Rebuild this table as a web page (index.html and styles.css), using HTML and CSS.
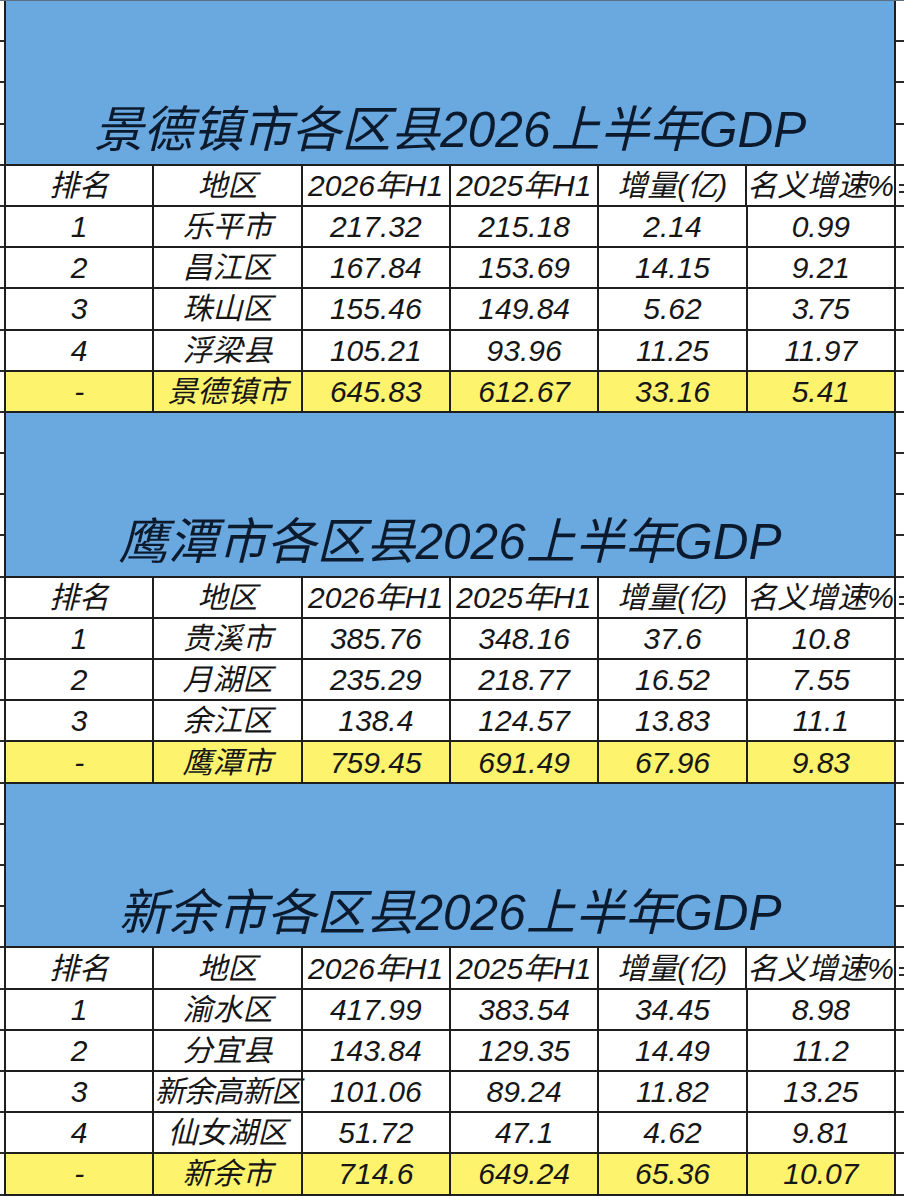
FILE: index.html
```html
<!DOCTYPE html>
<html lang="zh-CN">
<head>
<meta charset="utf-8">
<title>江西各市区县2026上半年GDP</title>
<link rel="stylesheet" href="styles.css">
</head>
<body>
<div class="page">

  <section class="block">
    <div class="edge edge-left">
      <div class="ec"></div><div class="ec"></div><div class="ec"></div><div class="ec"></div>
      <div class="ec"></div><div class="ec"></div><div class="ec"></div><div class="ec"></div><div class="ec"></div><div class="ec"></div>
    </div>
    <div class="sheet">
      <div class="title">景德镇市各区县2026上半年GDP</div>
      <div class="row head"><div class="c">排名</div><div class="c">地区</div><div class="c">2026年H1</div><div class="c">2025年H1</div><div class="c">增量(亿)</div><div class="c">名义增速%</div></div>
      <div class="row"><div class="c">1</div><div class="c">乐平市</div><div class="c">217.32</div><div class="c">215.18</div><div class="c">2.14</div><div class="c">0.99</div></div>
      <div class="row"><div class="c">2</div><div class="c">昌江区</div><div class="c">167.84</div><div class="c">153.69</div><div class="c">14.15</div><div class="c">9.21</div></div>
      <div class="row"><div class="c">3</div><div class="c">珠山区</div><div class="c">155.46</div><div class="c">149.84</div><div class="c">5.62</div><div class="c">3.75</div></div>
      <div class="row"><div class="c">4</div><div class="c">浮梁县</div><div class="c">105.21</div><div class="c">93.96</div><div class="c">11.25</div><div class="c">11.97</div></div>
      <div class="row total"><div class="c">-</div><div class="c">景德镇市</div><div class="c">645.83</div><div class="c">612.67</div><div class="c">33.16</div><div class="c">5.41</div></div>
    </div>
    <div class="edge edge-right">
      <div class="ec"></div><div class="ec"></div><div class="ec"></div><div class="ec"></div>
      <div class="ec"><span class="peek"></span></div><div class="ec"></div><div class="ec"></div><div class="ec"></div><div class="ec"></div><div class="ec"></div>
    </div>
  </section>

  <section class="block">
    <div class="edge edge-left">
      <div class="ec"></div><div class="ec"></div><div class="ec"></div><div class="ec"></div>
      <div class="ec"></div><div class="ec"></div><div class="ec"></div><div class="ec"></div><div class="ec"></div>
    </div>
    <div class="sheet">
      <div class="title">鹰潭市各区县2026上半年GDP</div>
      <div class="row head"><div class="c">排名</div><div class="c">地区</div><div class="c">2026年H1</div><div class="c">2025年H1</div><div class="c">增量(亿)</div><div class="c">名义增速%</div></div>
      <div class="row"><div class="c">1</div><div class="c">贵溪市</div><div class="c">385.76</div><div class="c">348.16</div><div class="c">37.6</div><div class="c">10.8</div></div>
      <div class="row"><div class="c">2</div><div class="c">月湖区</div><div class="c">235.29</div><div class="c">218.77</div><div class="c">16.52</div><div class="c">7.55</div></div>
      <div class="row"><div class="c">3</div><div class="c">余江区</div><div class="c">138.4</div><div class="c">124.57</div><div class="c">13.83</div><div class="c">11.1</div></div>
      <div class="row total"><div class="c">-</div><div class="c">鹰潭市</div><div class="c">759.45</div><div class="c">691.49</div><div class="c">67.96</div><div class="c">9.83</div></div>
    </div>
    <div class="edge edge-right">
      <div class="ec"></div><div class="ec"></div><div class="ec"></div><div class="ec"></div>
      <div class="ec"><span class="peek"></span></div><div class="ec"></div><div class="ec"></div><div class="ec"></div><div class="ec"></div>
    </div>
  </section>

  <section class="block">
    <div class="edge edge-left">
      <div class="ec"></div><div class="ec"></div><div class="ec"></div><div class="ec"></div>
      <div class="ec"></div><div class="ec"></div><div class="ec"></div><div class="ec"></div><div class="ec"></div><div class="ec"></div>
    </div>
    <div class="sheet">
      <div class="title">新余市各区县2026上半年GDP</div>
      <div class="row head"><div class="c">排名</div><div class="c">地区</div><div class="c">2026年H1</div><div class="c">2025年H1</div><div class="c">增量(亿)</div><div class="c">名义增速%</div></div>
      <div class="row"><div class="c">1</div><div class="c">渝水区</div><div class="c">417.99</div><div class="c">383.54</div><div class="c">34.45</div><div class="c">8.98</div></div>
      <div class="row"><div class="c">2</div><div class="c">分宜县</div><div class="c">143.84</div><div class="c">129.35</div><div class="c">14.49</div><div class="c">11.2</div></div>
      <div class="row"><div class="c">3</div><div class="c tight">新余高新区</div><div class="c">101.06</div><div class="c">89.24</div><div class="c">11.82</div><div class="c">13.25</div></div>
      <div class="row"><div class="c">4</div><div class="c">仙女湖区</div><div class="c">51.72</div><div class="c">47.1</div><div class="c">4.62</div><div class="c">9.81</div></div>
      <div class="row total"><div class="c">-</div><div class="c">新余市</div><div class="c">714.6</div><div class="c">649.24</div><div class="c">65.36</div><div class="c">10.07</div></div>
    </div>
    <div class="edge edge-right">
      <div class="ec"></div><div class="ec"></div><div class="ec"></div><div class="ec"></div>
      <div class="ec"><span class="peek"></span></div><div class="ec"></div><div class="ec"></div><div class="ec"></div><div class="ec"></div><div class="ec"></div>
    </div>
  </section>

</div>
</body>
</html>
```

FILE: styles.css
```css
* { box-sizing: border-box; }

html, body {
  margin: 0;
  padding: 0;
  background: #ffffff;
}

body {
  width: 904px;
  height: 1196px;
  overflow: hidden;
  font-family: "Liberation Sans", "Noto Sans CJK SC", sans-serif;
  color: #161616;
}

.page {
  border-top: 1px solid #5b6f86;
}

.block {
  display: flex;
}

.edge {
  display: flex;
  flex-direction: column;
}

.edge-left {
  width: 6px;
  border-right: 2px solid #1e1e1e;
}

.edge-right {
  width: 8px;
}

.ec {
  height: 41.2px;
  border-bottom: 2px solid #2a2a2a;
  overflow: hidden;
  display: flex;
  align-items: center;
  padding-left: 3px;
}

.peek {
  display: block;
  width: 6px;
  height: 9px;
  border-top: 2px solid #2a2a2a;
  border-bottom: 2px solid #2a2a2a;
  margin-top: 6px;
}

.sheet {
  width: 890px;
  display: flex;
  flex-direction: column;
}

.title {
  height: 164.8px;
  background: #6aa8e0;
  border-bottom: 2px solid #1e1e1e;
  border-right: 2px solid #1e1e1e;
  display: flex;
  align-items: flex-end;
  justify-content: center;
  padding-bottom: 4px;
  font-size: 49.5px;
  line-height: 1.2;
  font-style: italic;
  color: #0c1a2e;
  white-space: nowrap;
}

.row {
  height: 41.2px;
  display: grid;
  grid-template-columns: repeat(6, 1fr);
}

.c {
  border-right: 2px solid #1e1e1e;
  border-bottom: 2px solid #1e1e1e;
  display: flex;
  align-items: center;
  justify-content: center;
  font-size: 30px;
  line-height: 1;
  font-style: italic;
  white-space: nowrap;
  overflow: visible;
  padding-top: 1px;
}

.tight {
  letter-spacing: -1px;
}

.total .c {
  background: #fdf36c;
}
```
